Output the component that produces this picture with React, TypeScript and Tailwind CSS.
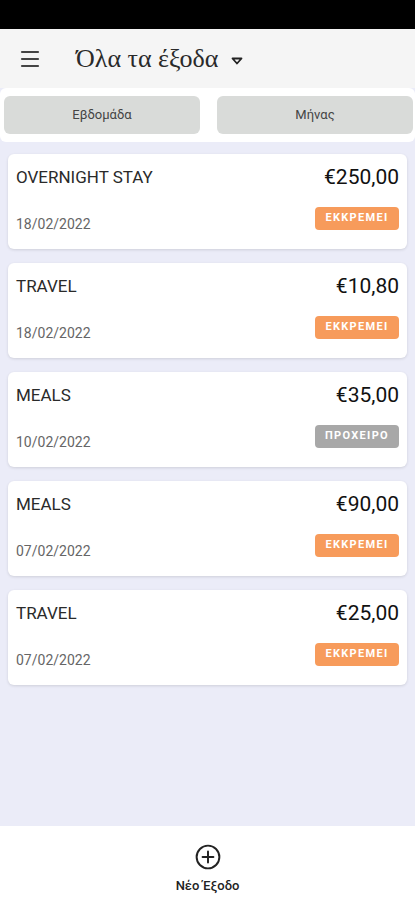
import { Menu } from "lucide-react";

type Expense = {
  title: string;
  amount: string;
  date: string;
  status: "pending" | "draft";
};

const expenses: Expense[] = [
  { title: "OVERNIGHT STAY", amount: "€250,00", date: "18/02/2022", status: "pending" },
  { title: "TRAVEL", amount: "€10,80", date: "18/02/2022", status: "pending" },
  { title: "MEALS", amount: "€35,00", date: "10/02/2022", status: "draft" },
  { title: "MEALS", amount: "€90,00", date: "07/02/2022", status: "pending" },
  { title: "TRAVEL", amount: "€25,00", date: "07/02/2022", status: "pending" },
];

export default function App() {
  return (
    <div className="flex h-[900px] w-[415px] flex-col overflow-hidden bg-[#ebecf8] font-['Roboto',sans-serif]">
      <div className="h-[29px] shrink-0 bg-black" />

      <header className="flex h-[59px] shrink-0 items-center bg-[#f5f5f5] pl-[18px]">
        <Menu size={24} strokeWidth={2.2} className="text-[#444]" />
        <h1 className="ml-[34px] font-['Liberation_Serif',serif] text-[26px] text-[#2a2a2a]">
          Όλα τα έξοδα
        </h1>
        <svg width="12" height="8" viewBox="0 0 12 8" className="ml-[12px] mt-[5px]">
          <path d="M1.5 1.5h9L6 6.5z" fill="none" stroke="#222" strokeWidth="1.8" strokeLinejoin="round" />
        </svg>
      </header>

      <div className="flex h-[54px] shrink-0 gap-[17px] rounded-md bg-white py-[8px] pl-[4px] pr-[2px]">
        {["Εβδομάδα", "Μήνας"].map((t) => (
          <button
            key={t}
            className="flex-1 rounded-md bg-[#d9dbd9] text-[13px] text-[#444]"
          >
            {t}
          </button>
        ))}
      </div>

      <main className="flex flex-1 flex-col gap-[14px] px-[8px] pt-[12px]">
        {expenses.map((e, i) => (
          <div
            key={i}
            className="flex h-[95px] flex-col justify-between rounded-md bg-white pb-[14px] pl-[8px] pr-[8px] pt-[8px] shadow-[0_1px_3px_rgba(0,0,0,0.12)]"
          >
            <div className="flex items-center justify-between">
              <span className="text-[17px] text-[#2a2a2a]">{e.title}</span>
              <span className="text-[21px] text-[#111]">{e.amount}</span>
            </div>
            <div className="flex items-end justify-between">
              <span className="text-[14px] text-[#666]">{e.date}</span>
              <span
                className={`mb-[5px] flex h-[23px] w-[84px] items-center justify-center rounded-[4px] text-[11px] font-bold tracking-[0.12em] text-white ${
                  e.status === "pending" ? "bg-[#f79b5b]" : "bg-[#a8a8a8]"
                }`}
              >
                {e.status === "pending" ? "ΕΚΚΡΕΜΕΙ" : "ΠΡΟΧΕΙΡΟ"}
              </span>
            </div>
          </div>
        ))}
      </main>

      <nav className="flex h-[74px] shrink-0 flex-col items-center bg-white pt-[18px]">
        <svg width="26" height="26" viewBox="0 0 24 24" fill="none" stroke="#222" strokeWidth="1.8" strokeLinecap="round">
          <circle cx="12" cy="12" r="10.5" />
          <path d="M12 7v10M7 12h10" />
        </svg>
        <span className="mt-[6px] text-[13px] font-medium text-[#222]">Νέο Έξοδο</span>
      </nav>
    </div>
  );
}
